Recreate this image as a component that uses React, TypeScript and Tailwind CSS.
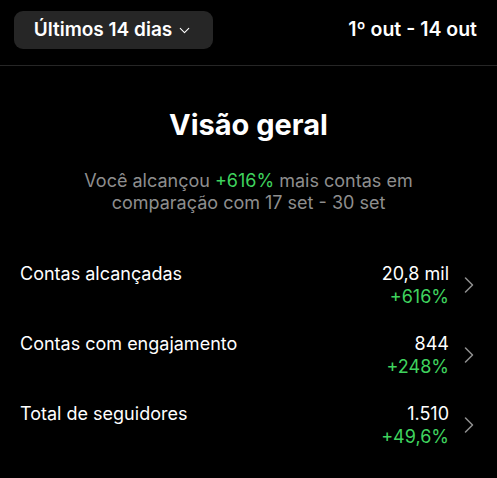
import { ChevronDown, ChevronRight } from 'lucide-react'

interface Metric {
    label: string
    value: string
    change: string
}

const metrics: Metric[] = [
    { label: 'Contas alcançadas', value: '20,8 mil', change: '+616%' },
    { label: 'Contas com engajamento', value: '844', change: '+248%' },
    { label: 'Total de seguidores', value: '1.510', change: '+49,6%' },
]

export default function App() {
    return (
        <div
            className="w-[497px] h-[478px] bg-black text-white overflow-hidden"
            style={{ fontFamily: 'Inter, "Noto Sans", sans-serif' }}
        >
            {/* Header */}
            <div className="flex items-center justify-between pl-[14px] pr-[20px] pt-[11px] pb-[16px] border-b border-[#262626]">
                <button className="h-[38px] w-[199px] rounded-[9px] bg-[#262626] flex items-center justify-center gap-[4px] text-[19px] font-semibold">
                    Últimos 14 dias
                    <ChevronDown size={17} strokeWidth={1.5} className="mt-[1px]" />
                </button>
                <span className="text-[19.5px] font-semibold">1º out - 14 out</span>
            </div>

            {/* Overview */}
            <div className="flex flex-col items-center pt-[40px]">
                <h1 className="text-[29px] font-bold leading-[37px]">Visão geral</h1>
                <p className="mt-[27px] text-center text-[18px] leading-[22px] text-[#8e8e8e]">
                    Você alcançou <span className="text-[#3fd35e]">+616%</span> mais contas em
                    <br />
                    comparação com 17 set - 30 set
                </p>
            </div>

            {/* Metrics */}
            <div className="flex flex-col mt-[48px]">
                {metrics.map((m) => (
                    <div key={m.label} className="flex items-start h-[70px] pl-[20px] pr-[14px]">
                        <span className="flex-1 text-[18px] leading-[23px]">{m.label}</span>
                        <div className="flex flex-col items-end text-[18px] leading-[23px]">
                            <span>{m.value}</span>
                            <span className="text-[#3fd35e]">{m.change}</span>
                        </div>
                        <ChevronRight size={28} strokeWidth={1.3} className="ml-[6px] mt-[9px] text-[#8e8e8e]" />
                    </div>
                ))}
            </div>
        </div>
    )
}
